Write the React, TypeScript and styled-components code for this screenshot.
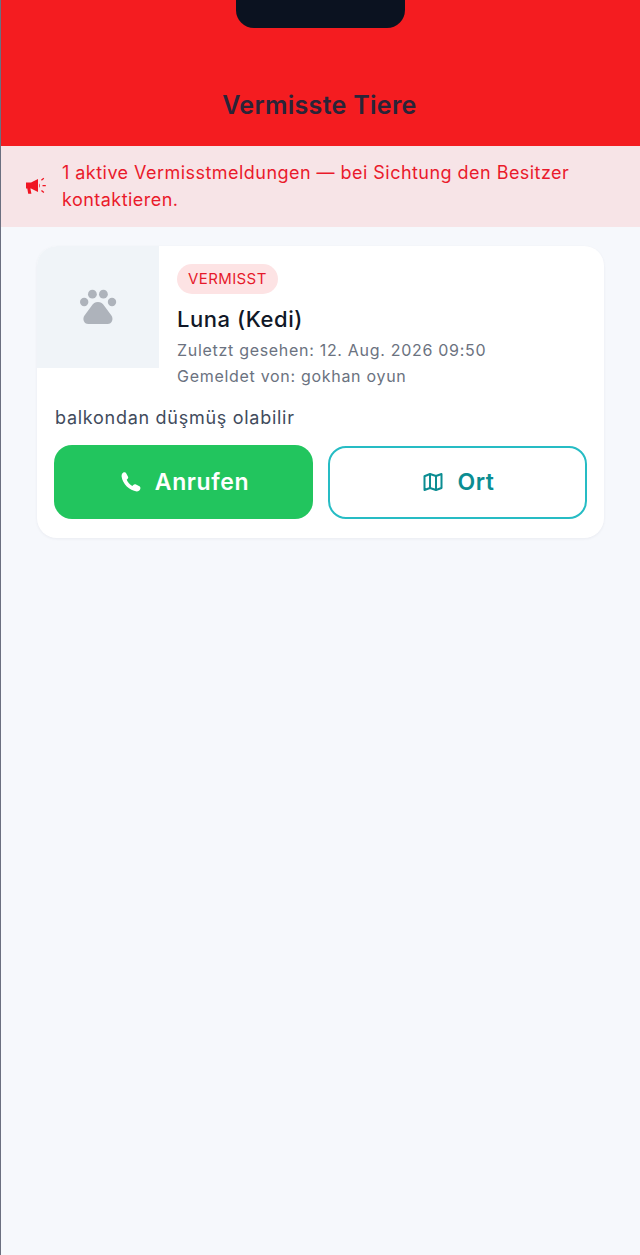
import React from "react";
import styled, { createGlobalStyle } from "styled-components";

const Global = createGlobalStyle`
  html, body { margin: 0; padding: 0; background: #f6f8fc; }
  * { box-sizing: border-box; }
`;

const Page = styled.div`
  position: relative;
  width: 640px;
  height: 1255px;
  background: #f6f8fc;
  border-left: 1px solid #6b6f80;
  font-family: Inter, "Noto Sans", sans-serif;
  overflow: hidden;
`;

const Notch = styled.div`
  position: absolute;
  top: 0;
  left: 235px;
  width: 169px;
  height: 27.5px;
  background: #0b1220;
  border-radius: 0 0 18px 18px;
`;

const Header = styled.header`
  height: 145.5px;
  background: #f41c20;
  display: flex;
  align-items: flex-end;
  justify-content: center;
  padding-bottom: 25px;
`;

const Title = styled.h1`
  margin: 0;
  font-size: 25px;
  line-height: 32px;
  font-weight: 600;
  letter-spacing: 0.3px;
  color: #2a2438;
  transform: translateX(-1px);
`;

const Banner = styled.div`
  height: 81.5px;
  background: #f7e4e7;
  display: flex;
  align-items: center;
  gap: 14px;
  padding: 0 24px;
  color: #ea1a2b;
  font-size: 18px;
  line-height: 27px;
  letter-spacing: 0.46px;
`;

const BannerIcon = styled.svg`
  width: 23px;
  height: 20px;
  flex: none;
  color: #f01523;
`;

const Card = styled.section`
  margin: 19px 36px 0 36px;
  height: 292px;
  background: #fff;
  border-radius: 20px;
  box-shadow: 0 1px 3px rgba(30, 40, 70, 0.06);
  overflow: hidden;
`;

const Top = styled.div`
  display: flex;
  height: 158px;
`;

const Thumb = styled.div`
  width: 122px;
  height: 122px;
  flex: none;
  background: #f0f4f8;
  display: flex;
  align-items: center;
  justify-content: center;
`;

const PawIcon = styled.svg`
  width: 38px;
  height: 38px;
  color: #aeb3bb;
`;

const Info = styled.div`
  padding: 18px 0 0 18px;
  display: flex;
  flex-direction: column;
  align-items: flex-start;
`;

const Badge = styled.span`
  height: 30px;
  padding: 0 11px;
  border-radius: 15px;
  background: #fde3e4;
  color: #e6192b;
  font-size: 15px;
  font-weight: 400;
  line-height: 30px;
  letter-spacing: 0.4px;
`;

const Name = styled.h2`
  margin: 9px 0 1.5px;
  font-size: 22px;
  line-height: 32px;
  font-weight: 450;
  letter-spacing: 0.55px;
  color: #111827;
`;

const Meta = styled.p`
  margin: 0;
  font-size: 16px;
  line-height: 26px;
  color: #6b7280;
  letter-spacing: 0.7px;
`;

const Body = styled.div`
  padding: 0 17px;
`;

const Note = styled.p`
  margin: 0 0 0 1px;
  font-size: 18px;
  line-height: 28px;
  color: #414b5c;
  letter-spacing: 0.72px;
`;

const Actions = styled.div`
  display: grid;
  grid-template-columns: 1fr 1fr;
  align-items: center;
  gap: 15px;
  margin-top: 13px;
`;

const Action = styled.button<{ $variant: "call" | "map" }>`
  height: ${(p) => (p.$variant === "call" ? "74px" : "73px")};
  border-radius: 18px;
  display: flex;
  align-items: center;
  justify-content: center;
  gap: 14px;
  font-family: inherit;
  font-size: 23px;
  font-weight: 600;
  letter-spacing: 0.6px;
  background: ${(p) => (p.$variant === "call" ? "#22c55e" : "#fff")};
  color: ${(p) => (p.$variant === "call" ? "#fff" : "#0b8d92")};
  border: ${(p) => (p.$variant === "call" ? "none" : "2px solid #26bcc4")};
  padding: 0 0 0 3px;
`;

const ActionIcon = styled.svg`
  width: 20px;
  height: 20px;
  flex: none;
`;

export default function App() {
  return (
    <>
      <Global />
      <Page>
        <Header>
          <Title>Vermisste Tiere</Title>
        </Header>
        <Notch />
        <Banner>
          <BannerIcon viewBox="0 0 23 20" fill="currentColor" aria-hidden="true">
            <path d="M1 6.5h5L13 3v13L6 12.6H5.4l1 5.2H3.2l-.9-5.2H1z" />
            <path d="M14.2 7.4c1 .5 1 3.8 0 4.4z" />
            <path d="M16 3.8l2.4-2 .8 1-2.4 2zM17.5 9h3.3v1.3h-3.3zM16 15l.9-1 2.4 2-.9 1z" />
          </BannerIcon>
          <span>1 aktive Vermisstmeldungen — bei Sichtung den Besitzer kontaktieren.</span>
        </Banner>
        <Card>
          <Top>
            <Thumb>
              <PawIcon viewBox="0 1 38 38" fill="currentColor" aria-hidden="true">
                <circle cx="5.2" cy="15" r="4.2" />
                <circle cx="13.4" cy="7.2" r="4.4" />
                <circle cx="24.4" cy="7.2" r="4.4" />
                <circle cx="33" cy="15" r="4.2" />
                <path d="M18.9 15c3 0 4.800 1.500 6.500 4l7 9.500c2.400 3.400.6 8.500-3.800 8.500H9.300c-4.400 0-6.200-5.100-3.800-8.500l7-9.500c1.700-2.500 3.500-4 6.400-4z" />
              </PawIcon>
            </Thumb>
            <Info>
              <Badge>VERMISST</Badge>
              <Name>Luna (Kedi)</Name>
              <Meta>Zuletzt gesehen: 12. Aug. 2026 09:50</Meta>
              <Meta>Gemeldet von: gokhan oyun</Meta>
            </Info>
          </Top>
          <Body>
            <Note>balkondan düşmüş olabilir</Note>
            <Actions>
              <Action $variant="call">
                <ActionIcon viewBox="0 0 20 20" fill="currentColor" aria-hidden="true">
                  <path d="M2.300.600C3.600 0 4.700.300 5.300 1.400L6.900 4.400C7.500 5.500 7.200 6.300 6.400 7L5.700 7.700C6.600 10 8.800 12.600 11.300 14L12.300 13C13.100 12.300 14 12.100 15 12.600L18 14.100C19.300 14.800 19.700 15.900 19.300 17.100C18.800 18.500 17.500 19.500 15.800 19.500C8.500 18.800 1.500 11.800.600 4.600C.500 2.800 1.100 1.300 2.300.600Z" />
                </ActionIcon>
                Anrufen
              </Action>
              <Action $variant="map">
                <ActionIcon
                  viewBox="0 0 20 20"
                  fill="none"
                  stroke="currentColor"
                  strokeWidth="2"
                  strokeLinejoin="round"
                  aria-hidden="true"
                >
                  <path d="M1.500 4.200L7 2L13 4L18.500 2V16L13 18L7 16L1.500 18Z" />
                  <path d="M7 2V16M13 4V18" />
                </ActionIcon>
                Ort
              </Action>
            </Actions>
          </Body>
        </Card>
      </Page>
    </>
  );
}
